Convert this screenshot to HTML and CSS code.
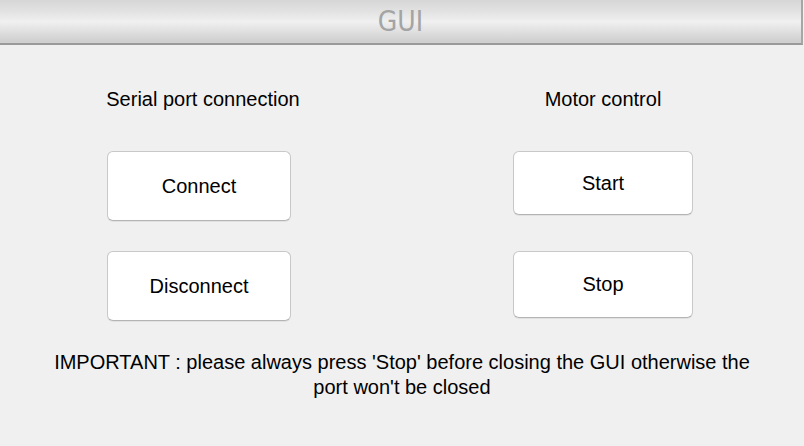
FILE: index.html
```html
<!DOCTYPE html>
<html>
<head>
<meta charset="utf-8">
<link rel="stylesheet" href="styles.css">
</head>
<body>
<div class="window">
  <header class="titlebar"><span class="title">GUI</span></header>
  <main class="content">
    <section class="col col-left">
      <div class="label">Serial port connection</div>
      <button class="btn btn-wide btn-first">Connect</button>
      <button class="btn btn-wide">Disconnect</button>
    </section>
    <section class="col col-right">
      <div class="label">Motor control</div>
      <button class="btn btn-narrow btn-start">Start</button>
      <button class="btn btn-narrow btn-stop">Stop</button>
    </section>
  </main>
  <p class="note">IMPORTANT : please always press 'Stop' before closing the GUI otherwise the<br>port won't be closed</p>
</div>
</body>
</html>
```
FILE: styles.css
```css
* { box-sizing: border-box; }
html, body { margin: 0; padding: 0; }
body {
  width: 804px;
  height: 446px;
  background: #f0f0f0;
  font-family: "Liberation Sans", Arial, sans-serif;
  color: #000;
  overflow: hidden;
}
.titlebar {
  height: 45px;
  width: 803px;
  background: linear-gradient(to bottom, #d6d6d6 0%, #e4e4e4 30%, #f0f0f0 50%, #e2e2e2 70%, #d0d0d0 95%);
  border-right: 2px solid #a6a6a6;
  border-bottom: 2px solid #9a9a9a;
  display: flex;
  justify-content: center;
  align-items: center;
}
.title {
  font-family: "DejaVu Sans Condensed", "DejaVu Sans", sans-serif;
  font-size: 28px;
  color: #a4a4a4;
}
.content {
  display: grid;
  grid-template-columns: 398px 1fr;
  padding-top: 43px;
}
.col {
  display: flex;
  flex-direction: column;
  align-items: center;
}
.col-right { padding-left: 4px; }
.label {
  font-size: 20px;
  line-height: 22px;
  height: 22px;
  margin-bottom: 41px;
}
.col-left .label { padding-left: 8px; }
.btn {
  font-family: "Liberation Sans", Arial, sans-serif;
  font-size: 20px;
  color: #000;
  background: #fff;
  border: 1px solid #c8c8c8;
  border-bottom-color: #b4b4b4;
  border-radius: 6px;
  box-shadow: 0 1px 0 rgba(0,0,0,0.06);
  padding: 0;
}
.btn-wide { width: 184px; height: 70px; }
.btn-first { margin-bottom: 30px; }
.btn-narrow { width: 180px; }
.btn-start { height: 64px; margin-bottom: 36px; }
.btn-stop { height: 67px; }
.note {
  margin: 0;
  padding-top: 29px;
  text-align: center;
  font-size: 20px;
  line-height: 25px;
}
```
